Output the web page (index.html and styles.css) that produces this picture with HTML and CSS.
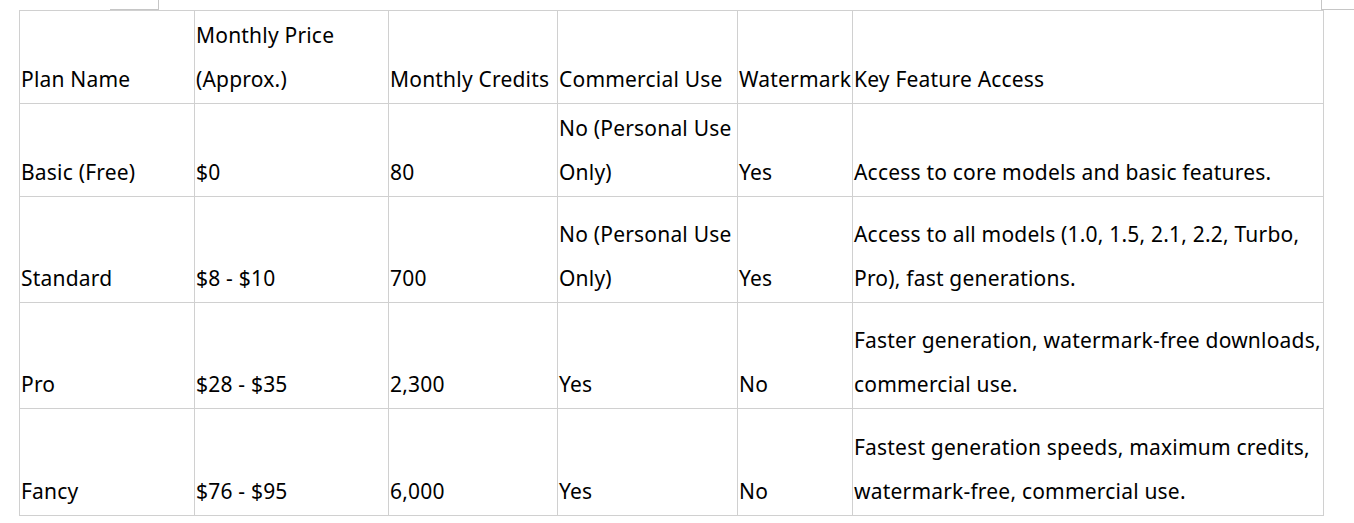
FILE: index.html
```html
<!DOCTYPE html>
<html>
<head>
<meta charset="utf-8">
<link rel="stylesheet" href="styles.css">
</head>
<body>
<div class="page">
  <div class="mark mark-left"></div>
  <div class="mark mark-right"></div>
  <table class="plans">
    <colgroup>
      <col class="c1"><col class="c2"><col class="c3"><col class="c4"><col class="c5"><col class="c6">
    </colgroup>
    <tr class="r-head">
      <td>Plan Name</td>
      <td>Monthly Price (Approx.)</td>
      <td>Monthly Credits</td>
      <td>Commercial Use</td>
      <td class="nowrap">Watermark</td>
      <td>Key Feature Access</td>
    </tr>
    <tr class="r-short">
      <td>Basic (Free)</td>
      <td>$0</td>
      <td>80</td>
      <td>No (Personal Use Only)</td>
      <td>Yes</td>
      <td>Access to core models and basic features.</td>
    </tr>
    <tr class="r-tall">
      <td>Standard</td>
      <td>$8 - $10</td>
      <td>700</td>
      <td>No (Personal Use Only)</td>
      <td>Yes</td>
      <td>Access to all models (1.0, 1.5, 2.1, 2.2, Turbo, Pro), fast generations.</td>
    </tr>
    <tr class="r-tall">
      <td>Pro</td>
      <td>$28 - $35</td>
      <td>2,300</td>
      <td>Yes</td>
      <td>No</td>
      <td>Faster generation, watermark-free downloads, commercial use.</td>
    </tr>
    <tr class="r-last">
      <td>Fancy</td>
      <td>$76 - $95</td>
      <td>6,000</td>
      <td>Yes</td>
      <td>No</td>
      <td>Fastest generation speeds, maximum credits, watermark-free, commercial use.</td>
    </tr>
  </table>
</div>
</body>
</html>
```
FILE: styles.css
```css
html, body {
  margin: 0;
  padding: 0;
  background: #ffffff;
}
.page {
  position: relative;
  width: 1354px;
  height: 523px;
  overflow: hidden;
  padding: 10px 0 0 19px;
  box-sizing: border-box;
  font-family: "Noto Sans", "Open Sans", sans-serif;
  color: #000;
}
.mark {
  position: absolute;
  top: 0;
  height: 9px;
  border-bottom: 1px solid #c6c6c6;
}
.mark-left {
  left: 110px;
  width: 48px;
  border-right: 1px solid #c6c6c6;
}
.mark-right {
  left: 1321px;
  width: 33px;
  border-left: 1px solid #c6c6c6;
}
.plans {
  border-collapse: collapse;
  table-layout: fixed;
  width: 1304px;
  font-size: 21px;
  letter-spacing: 0.2px;
  line-height: 44px;
}
.c1 { width: 175px; }
.c2 { width: 194px; }
.c3 { width: 169px; }
.c4 { width: 180px; }
.c5 { width: 115px; }
.c6 { width: 471px; }
.plans td {
  border: 1px solid #d0d0d0;
  vertical-align: bottom;
  padding: 0 1px 2px 1px;
  overflow: visible;
  white-space: normal;
  box-sizing: border-box;
}
.plans td.nowrap {
  white-space: nowrap;
}
.r-head td, .r-short td { height: 93px; }
.r-tall td { height: 106px; }
.r-last td { height: 107px; }
```
